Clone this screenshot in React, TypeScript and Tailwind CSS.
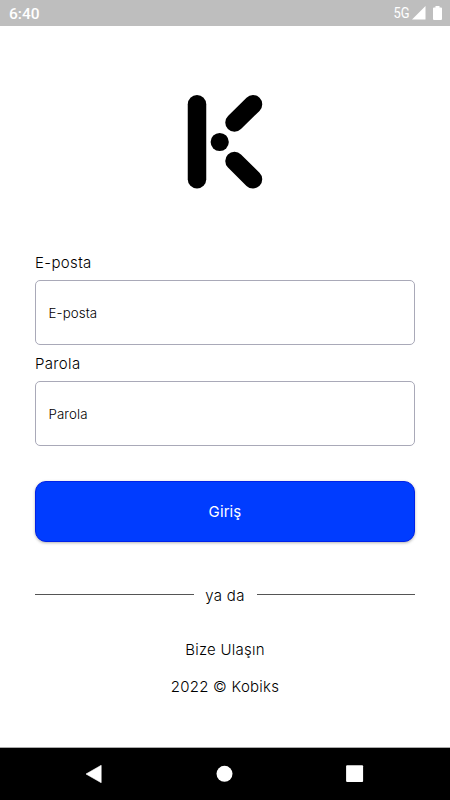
import type { ReactNode } from "react";

function StatusBar() {
  return (
    <div className="flex h-[26px] shrink-0 items-center justify-between bg-[#bebebe] pr-2 pl-[9px] font-['Roboto',sans-serif] text-white">
      <span className="pt-[3px] text-[15.5px] leading-none font-medium">6:40</span>
      <div className="flex items-center">
        <span className="mr-[2px] origin-right scale-x-[0.86] pt-[1px] text-[15px] leading-none font-normal">5G</span>
        <svg width="14" height="14" viewBox="0 0 14 14" fill="currentColor">
          <path d="M13.500 0v13.500H0z" />
        </svg>
        <svg className="ml-[7px]" width="9" height="14" viewBox="0 0 9 14" fill="currentColor">
          <path d="M2.500 0h4v1.400H8a1 1 0 0 1 1 1V13a1 1 0 0 1-1 1H1a1 1 0 0 1-1-1V2.400a1 1 0 0 1 1-1h1.500z" />
        </svg>
      </div>
    </div>
  );
}

function Logo() {
  return (
    <svg className="mx-auto mt-[69px] shrink-0" width="76" height="94" viewBox="-0.500 0 76 94" fill="none" stroke="black" strokeWidth="18.500" strokeLinecap="round">
      <path d="M9.500 9.300v75" />
      <path d="M65.500 9.300 47 27.500" />
      <path d="M47 66l18.500 18.300" />
      <circle cx="32.200" cy="47" r="9.100" fill="black" stroke="none" />
    </svg>
  );
}

function Field({ label, type }: { label: string; type: string }) {
  return (
    <label className="flex flex-col">
      <span className="h-[27px] text-[15px] leading-[20px] tracking-[0.35px]">{label}</span>
      <input
        type={type}
        placeholder={label}
        className="h-[65px] w-full rounded-[5px] border border-[#a9a9b8] px-[12.5px] text-[13.3px] tracking-[0.1px] outline-none placeholder:text-black"
      />
    </label>
  );
}

function Divider({ children }: { children: ReactNode }) {
  return (
    <div className="mt-[42px] flex h-5 items-center">
      <div className="h-px flex-1 bg-[#555]" />
      <span className="w-[63px] pt-[3px] text-center text-[15px] leading-5 tracking-[0.3px]">{children}</span>
      <div className="h-px flex-1 bg-[#555]" />
    </div>
  );
}

function NavBar() {
  return (
    <div className="flex h-[53px] shrink-0 items-center border-t border-[#aaa] bg-black pr-[86px] pl-[85px] text-white">
      <div className="flex flex-1 justify-between">
        <svg width="18" height="18" viewBox="0 0 18 18" fill="currentColor">
          <path d="M1 9 16.200.3V17.700z" stroke="currentColor" strokeWidth=".6" strokeLinejoin="round" />
        </svg>
        <svg width="18" height="18" viewBox="0 0 18 18" fill="currentColor">
          <circle cx="8.500" cy="8.800" r="8" />
        </svg>
        <svg width="18" height="18" viewBox="0 0 18 18" fill="currentColor">
          <rect x=".1" y=".2" width="17" height="16.800" rx="1" />
        </svg>
      </div>
    </div>
  );
}

export default function App() {
  return (
    <div className="flex h-[800px] w-[450px] flex-col bg-white font-['Inter',sans-serif] font-light text-black">
      <StatusBar />
      <main className="flex flex-1 flex-col px-[35px]">
        <Logo />
        <form className="mt-[64px] flex flex-col gap-[9px]" onSubmit={(e) => e.preventDefault()}>
          <Field label="E-posta" type="email" />
          <Field label="Parola" type="password" />
          <button
            type="submit"
            className="mt-[26px] h-[61px] rounded-[11px] border border-[#0022e8] bg-[#003cff] pt-[1px] text-[15px] font-normal tracking-[0.1px] text-white shadow-[0_1px_3px_rgba(0,0,0,0.3)]"
          >
            Giriş
          </button>
        </form>
        <Divider>ya da</Divider>
        <a className="mt-[36px] text-center text-[15px] leading-5 tracking-[0.25px]">Bize Ulaşın</a>
        <p className="mt-[17px] text-center text-[15px] leading-5 tracking-[0.25px]">2022 © Kobiks</p>
      </main>
      <NavBar />
    </div>
  );
}
